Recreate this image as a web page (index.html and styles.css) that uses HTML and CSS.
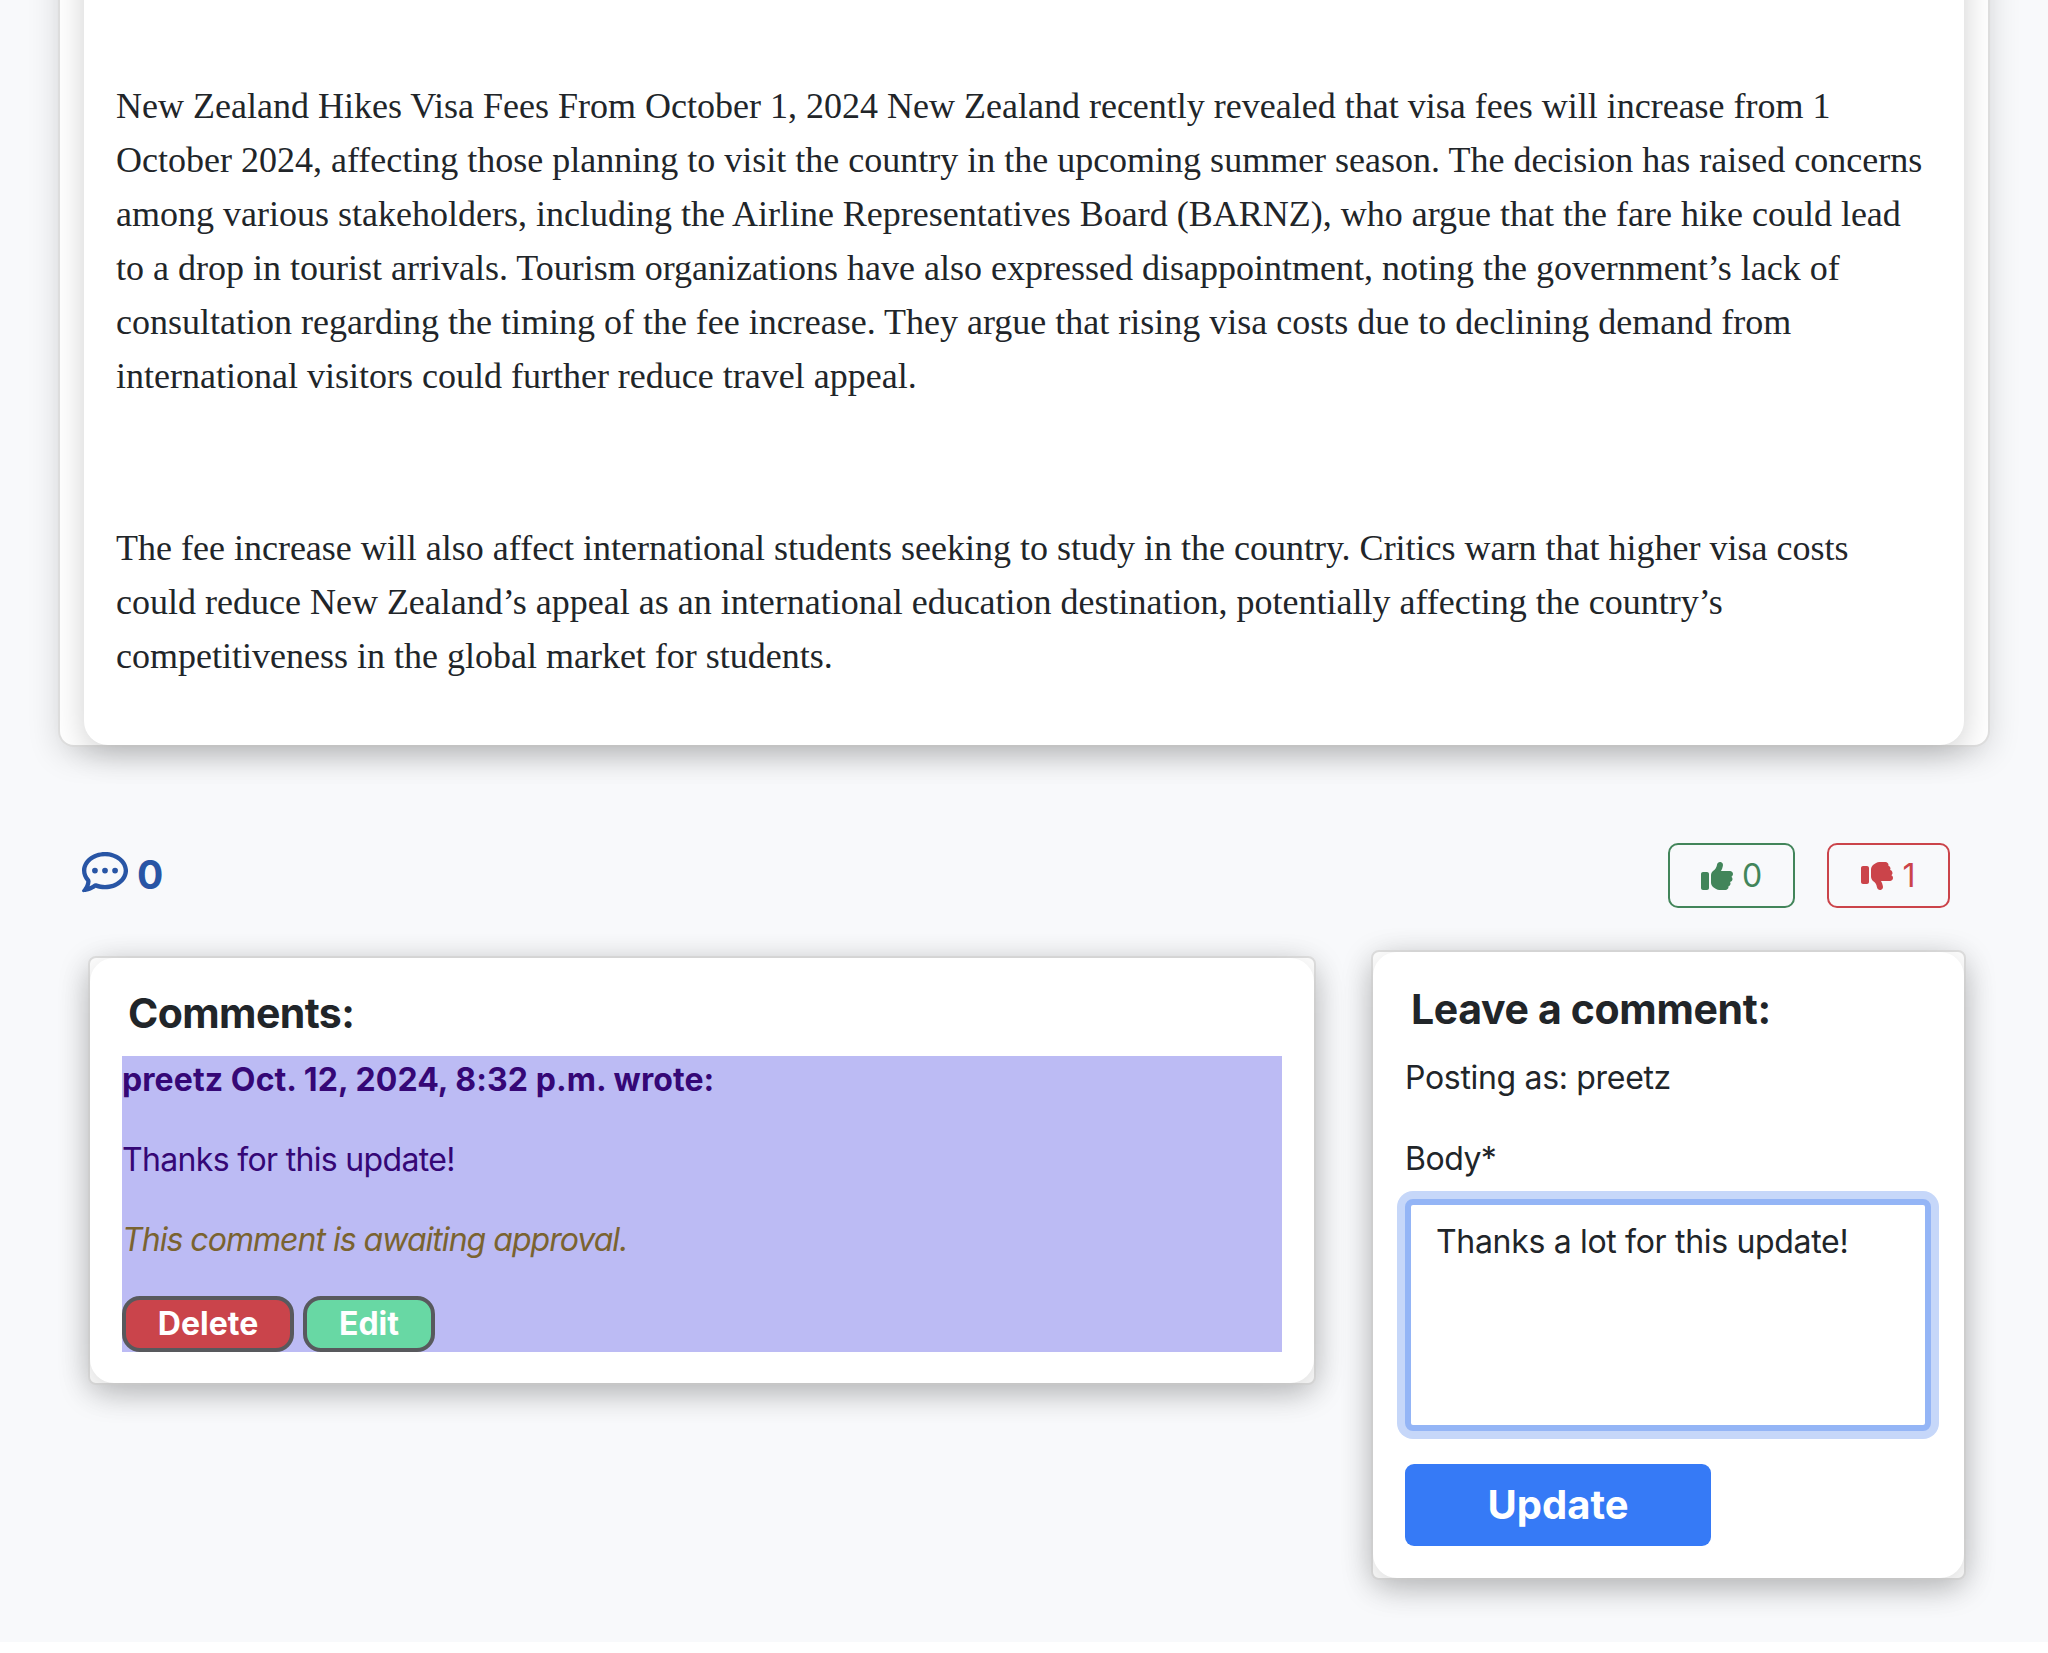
FILE: index.html
```html
<!DOCTYPE html>
<html lang="en">
<head>
<meta charset="utf-8">
<title>New Zealand Hikes Visa Fees</title>
<link rel="stylesheet" href="styles.css">
</head>
<body>
<main class="page">
  <article class="article-card">
    <div class="article-body">
      <p>New Zealand Hikes Visa Fees From October 1, 2024 New Zealand recently revealed that visa fees will increase from 1<br>October 2024, affecting those planning to visit the country in the upcoming summer season. The decision has raised concerns<br>among various stakeholders, including the Airline Representatives Board (BARNZ), who argue that the fare hike could lead<br>to a drop in tourist arrivals. Tourism organizations have also expressed disappointment, noting the government’s lack of<br>consultation regarding the timing of the fee increase. They argue that rising visa costs due to declining demand from<br>international visitors could further reduce travel appeal.</p>
      <p>The fee increase will also affect international students seeking to study in the country. Critics warn that higher visa costs<br>could reduce New Zealand’s appeal as an international education destination, potentially affecting the country’s<br>competitiveness in the global market for students.</p>
    </div>
  </article>

  <div class="reactions">
    <div class="comment-count">
      <svg class="count-icon" viewBox="0 0 512 512" fill="currentColor"><path d="M168.2 384.9c-15-5.4-31.7-3.1-44.6 6.4c-8.2 6-22.3 14.8-39.4 22.7c5.6-14.7 9.9-31.3 11.3-49.4c1-12.9-3.3-25.7-11.8-35.5C60.4 302.8 48 272 48 240c0-79.5 83.3-160 208-160s208 80.5 208 160s-83.3 160-208 160c-31.6 0-61.3-5.5-87.8-15.1zM26.3 423.8c-1.6 2.7-3.3 5.4-5.1 8.1l-.3 .5c-1.6 2.3-3.2 4.6-4.8 6.9c-3.5 4.7-7.3 9.3-11.3 13.5c-4.6 4.6-5.9 11.4-3.4 17.4c2.5 6 8.3 9.9 14.8 9.9c5.1 0 10.2-.3 15.3-.8l.7-.1c4.4-.5 8.8-1.1 13.2-1.9c.8-.1 1.6-.3 2.4-.5c17.8-3.5 34.9-9.5 50.1-16.1c22.9-10 42.4-21.9 54.3-30.6c31.8 11.5 67 17.9 104.1 17.9c141.4 0 256-93.1 256-208S397.4 32 256 32S0 125.1 0 240c0 45.1 17.7 86.8 47.7 120.9c-1.9 24.5-11.4 46.3-21.4 62.9zM144 272a32 32 0 1 0 0-64 32 32 0 1 0 0 64zm144-32a32 32 0 1 0 -64 0 32 32 0 1 0 64 0zm80 32a32 32 0 1 0 0-64 32 32 0 1 0 0 64z"/></svg>
      <span class="count-value">0</span>
    </div>
    <div class="votes">
      <button class="vote vote-up" type="button">
        <svg class="vote-icon" viewBox="0 0 512 512" fill="currentColor"><path d="M313.4 32.9c26 5.2 42.9 30.5 37.7 56.5l-2.3 11.4c-5.3 26.7-15.1 52.1-28.8 75.2H464c26.5 0 48 21.5 48 48c0 18.5-10.5 34.6-25.9 42.6C497 275.4 504 288.9 504 304c0 23.4-16.8 42.9-38.9 47.1c4.4 7.3 6.9 15.8 6.9 24.9c0 21.3-13.9 39.4-33.1 45.6c.7 3.3 1.1 6.8 1.1 10.4c0 26.5-21.5 48-48 48H294.5c-19 0-37.5-5.6-53.3-16.1l-38.5-25.7C176 420.4 160 390.4 160 358.3V320 272 247.1c0-29.2 13.3-56.7 36-75l7.4-5.9c26.5-21.2 44.6-51 51.2-84.2l2.3-11.4c5.2-26 30.5-42.9 56.5-37.7zM32 192H96c17.7 0 32 14.3 32 32V448c0 17.7-14.3 32-32 32H32c-17.7 0-32-14.3-32-32V224c0-17.7 14.3-32 32-32z"/></svg>
        <span>0</span>
      </button>
      <button class="vote vote-down" type="button">
        <svg class="vote-icon" viewBox="0 0 512 512" fill="currentColor"><path d="M313.4 479.1c26-5.2 42.9-30.5 37.7-56.5l-2.3-11.4c-5.3-26.7-15.1-52.1-28.8-75.2H464c26.5 0 48-21.5 48-48c0-18.5-10.5-34.6-25.9-42.6C497 236.6 504 223.1 504 208c0-23.4-16.8-42.9-38.9-47.1c4.4-7.3 6.9-15.8 6.9-24.9c0-21.3-13.9-39.4-33.1-45.6c.7-3.3 1.1-6.8 1.1-10.4c0-26.5-21.5-48-48-48H294.5c-19 0-37.5 5.6-53.3 16.1L202.7 73.8C176 91.6 160 121.6 160 153.7V192v48 24.9c0 29.2 13.3 56.7 36 75l7.4 5.9c26.5 21.2 44.6 51 51.2 84.2l2.3 11.4c5.2 26 30.5 42.9 56.5 37.7zM32 384H96c17.7 0 32-14.3 32-32V128c0-17.7-14.3-32-32-32H32C14.3 96 0 110.3 0 128V352c0 17.7 14.3 32 32 32z"/></svg>
        <span>1</span>
      </button>
    </div>
  </div>

  <div class="discussion">
    <section class="panel comments">
      <div class="panel-body">
        <h3 class="panel-title comments-title">Comments:</h3>
        <div class="comment">
          <p class="comment-meta">preetz Oct. 12, 2024, 8:32 p.m. wrote:</p>
          <p class="comment-text">Thanks for this update!</p>
          <p class="comment-status">This comment is awaiting approval.</p>
          <div class="comment-actions">
            <button class="action action-delete" type="button"><span>Delete</span></button>
            <button class="action action-edit" type="button"><span>Edit</span></button>
          </div>
        </div>
      </div>
    </section>

    <section class="panel leave">
      <div class="panel-body">
        <h3 class="panel-title">Leave a comment:</h3>
        <p class="posting-as">Posting as: preetz</p>
        <label class="body-label">Body*</label>
        <div class="body-input"><span>Thanks a lot for this update!</span></div>
        <button class="submit" type="button"><span>Update</span></button>
      </div>
    </section>
  </div>
</main>
</body>
</html>
```
FILE: styles.css
```css
* { box-sizing: border-box; }

body {
  margin: 0;
  background: #fff;
  color: #212529;
  font: 32px/48px Inter, "Liberation Sans", sans-serif;
}

p, h3 { margin: 0; }

button {
  margin: 0;
  padding: 0;
  font: inherit;
  display: flex;
  align-items: center;
  justify-content: center;
}

p, h3, span, label { white-space: nowrap; }

.page {
  height: 1642px;
  padding: 0 58px;
  background: #f8f9fb;
  overflow: hidden;
}

/* The card starts above the viewport so no top edge is visible. */
.article-card {
  height: 847px;
  margin-top: -100px;
  padding: 0 24px;
  background: #fff;
  border: 2px solid #dfdfdf;
  border-top: 0;
  border-radius: 0 0 16px 16px;
  box-shadow: 0 8px 32px rgba(0, 0, 0, .14);
}

.article-body {
  height: 845px;
  padding: 179px 32px 0;
  background: #fff;
  border-radius: 0 0 24px 24px;
  box-shadow: 0 8px 32px rgba(0, 0, 0, .19);
  font-family: "Liberation Serif", serif;
  font-size: 36px;
  line-height: 54px;
}

.article-body p + p { margin-top: 118px; }

.reactions {
  display: flex;
  justify-content: space-between;
  margin-top: 96px;
  padding: 0 40px 0 24px;
}

.comment-count {
  display: flex;
  align-items: center;
  color: #2855a5;
  height: 62px;
  gap: 9px;
}

.count-icon { width: 46px; height: 46px; margin-top: -5px; }
.count-value { padding-top: 2px; font-size: 39px; font-weight: 700; letter-spacing: -1px; }

.votes { display: flex; gap: 32px; }

.vote {
  height: 65px;
  gap: 9px;
  background: none;
  border: 2px solid;
  border-radius: 10px;
}

.vote-up { width: 127px; color: #42855a; }
.vote-down { width: 123px; color: #cb444a; }
.vote-icon { width: 32px; height: 32px; flex: none; }

.discussion {
  display: flex;
  align-items: flex-start;
  justify-content: space-between;
  padding: 0 24px 0 30px;
  margin-top: 42px;
}

.panel {
  background: #fff;
  border: 2px solid #dfdfdf;
  border-radius: 8px;
  box-shadow: 0 8px 32px rgba(0, 0, 0, .16);
}

.panel-body {
  height: 100%;
  padding: 32px;
  background: #fff;
  border-radius: 24px;
  box-shadow: 0 8px 32px rgba(0, 0, 0, .16);
}

.comments { width: 1228px; height: 429px; margin-top: 6px; }
.leave { width: 595px; height: 630px; }

.panel-title {
  padding-left: 6px;
  font-size: 41px;
  font-weight: 700;
  line-height: 50px;
  letter-spacing: -.35px;
}

.comments-title { line-height: 46px; letter-spacing: -.6px; }

.comment {
  height: 296px;
  margin-top: 20px;
  background: #bcbbf4;
  color: #350776;
}

.comment-meta { font-weight: 700; letter-spacing: .1px; }
.comment-text { margin-top: 32px; letter-spacing: -.67px; }
.comment-status { margin-top: 32px; color: #7a6330; font-style: italic; letter-spacing: -.98px; }

.comment-actions { display: flex; gap: 9px; margin-top: 32px; }

.action {
  height: 56px;
  color: #fff;
  font-weight: 700;
  border: 4px solid #58595d;
  border-radius: 18px;
}

.action-delete { width: 172px; background: #ca444b; }
.action-edit { width: 132px; background: #68d8a4; }

.posting-as { margin-top: 20px; letter-spacing: -.32px; }
.body-label { display: block; margin-top: 33px; letter-spacing: -.5px; }

.body-input {
  width: 526px;
  height: 232px;
  margin-top: 16px;
  padding: 13px 25px;
  background: #fff;
  border: 6px solid #94b5f6;
  border-radius: 8px;
  box-shadow: 0 0 0 8px #c6d7f9;
  letter-spacing: -.32px;
}

.submit {
  width: 306px;
  height: 82px;
  margin-top: 33px;
  color: #fff;
  background: #367af6;
  border: 0;
  border-radius: 9px;
  font-size: 40px;
  font-weight: 700;
}
```
